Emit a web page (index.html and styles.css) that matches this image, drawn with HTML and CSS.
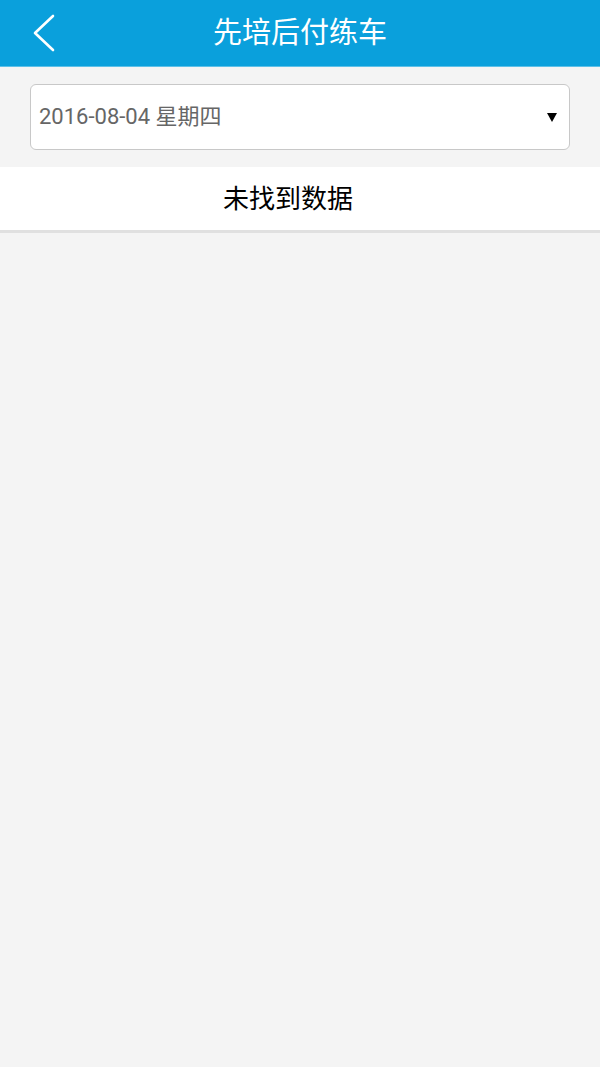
FILE: index.html
```html
<!DOCTYPE html>
<html>
<head>
	<meta charset="utf-8">
	<meta name="viewport" content="width=device-width"/>
	<link rel="stylesheet" href="styles.css">
</head>
<body>
<div class="head">
	<svg class="back" width="24" height="40" viewBox="0 0 24 40">
		<polyline points="21,3 3,20 21,37" fill="none" stroke="#fff" stroke-width="2.6" stroke-linecap="round" stroke-linejoin="round"/>
	</svg>
	<div class="title">先培后付练车</div>
</div>
<div class="main">
	<div class="selectbox">
		<span class="date">2016-08-04 星期四</span>
		<svg class="arrow" width="10" height="9" viewBox="0 0 10 9">
			<polygon points="0,0 10,0 5,9" fill="#000"/>
		</svg>
	</div>
	<div class="empty">未找到数据</div>
</div>
</body>
</html>
```

FILE: styles.css
```css
* {
	padding: 0;
	margin: 0;
}

body {
	background: #f4f4f4;
	font-family: Roboto, "Noto Sans CJK SC", sans-serif;
	width: 600px;
	height: 1067px;
	overflow: hidden;
}

.head {
	position: relative;
	height: 66px;
	background: #0aa0dc;
	border-bottom: 1px solid #5cc0e8;
	display: flex;
	align-items: center;
	justify-content: center;
}

.back {
	position: absolute;
	left: 32px;
	top: 13px;
}

.title {
	color: #fff;
	font-size: 29px;
	line-height: 1;
}

.main {
	padding-top: 17px;
}

.selectbox {
	margin: 0 30px;
	height: 64px;
	background: #fff;
	border: 1px solid #c8c8c8;
	border-radius: 6px;
	display: flex;
	align-items: center;
	justify-content: space-between;
	padding: 0 12px 0 8px;
}

.date {
	color: #666;
	font-size: 22px;
	line-height: 1;
}

.arrow {
	display: block;
}

.empty {
	margin-top: 17px;
	height: 63px;
	padding-right: 24px;
	background: #fff;
	border-bottom: 3px solid #e0e0e0;
	display: flex;
	align-items: center;
	justify-content: center;
	font-size: 26px;
	line-height: 1;
	color: #000;
}
```
